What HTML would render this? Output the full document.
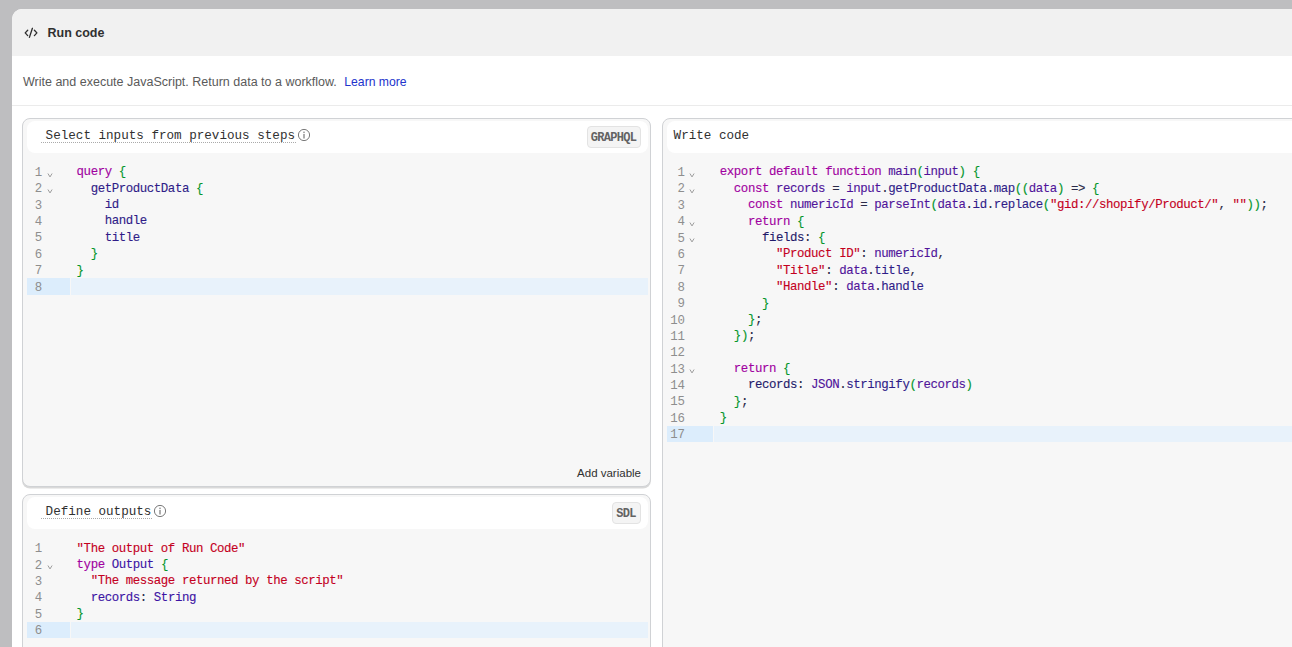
<!DOCTYPE html>
<html><head><meta charset="utf-8">
<style>
*{box-sizing:border-box;margin:0;padding:0}
html,body{width:1292px;height:647px;overflow:hidden;background:#bebec0;font-family:"Liberation Sans",sans-serif}
.modal{position:absolute;left:12px;top:9px;width:1400px;height:700px;background:#fff;border-radius:10px 10px 0 0;overflow:hidden}
.hdr{position:absolute;left:0;top:0;width:100%;height:47.2px;background:#f1f1f1}
.icon{position:absolute;left:12px;top:18px}
.title{position:absolute;left:35.5px;top:16px;font-size:12.5px;font-weight:bold;color:#303030;line-height:16px;white-space:nowrap}
.desc{position:absolute;left:11px;top:65px;font-size:12.5px;color:#5a5a5a;line-height:16px;white-space:nowrap}
.desc a{color:#2233cc;text-decoration:none;margin-left:4px;font-size:12.2px}
.sep{position:absolute;left:0;top:96px;width:100%;height:1px;background:#ebebeb}
.card{position:absolute;border:1px solid #d0d2d5;border-radius:8px;background:#f7f7f7}
.wh{position:absolute;left:3.6px;top:1.6px;right:1.8px;height:32.4px;background:#fff;border-radius:8px}
.ctitle{position:absolute;left:19px;top:7px;font-family:"Liberation Mono",monospace;font-size:12.6px;color:#303030;line-height:16px;white-space:nowrap}
.dots{position:absolute;height:1px;background:repeating-linear-gradient(to right,#aaaaaa 0 1px,transparent 1px 2px)}
.badge{position:absolute;border:1px solid #e3e3e3;background:#f4f4f4;border-radius:4px;font-family:"Liberation Mono",monospace;font-weight:bold;font-size:12px;letter-spacing:-0.7px;text-indent:-0.4px;color:#636363;text-align:center}
.ln{position:absolute;font-family:"Liberation Mono",monospace;font-size:12.4px;letter-spacing:-0.415px;line-height:16.38px;color:#8e8e8e;text-align:right;white-space:pre;margin-top:1.2px;margin-left:-0.6px}
.cl{position:absolute;font-family:"Liberation Mono",monospace;font-size:12.4px;letter-spacing:-0.415px;line-height:16.38px;color:#333;white-space:pre;-webkit-text-stroke:0.12px currentColor;margin-top:0.6px}
.info{position:absolute}
#root{position:relative;width:1292px;height:647px;overflow:hidden;background:#bebec0}
</style></head><body><div id="root">
<div class="modal">
  <div class="hdr">
    <svg class="icon" width="14" height="12" viewBox="0 0 14 12"><path d="M3.7 3.2L1.2 5.9L3.7 8.6M10.4 3.2L12.9 5.9L10.4 8.6M8.4 1.3L5.4 10.4" fill="none" stroke="#303030" stroke-width="1.35" stroke-linecap="round" stroke-linejoin="round"/></svg>
    <div class="title">Run code</div>
  </div>
  <div class="desc">Write and execute JavaScript. Return data to a workflow. <a>Learn more</a></div>
  <div class="sep"></div>
</div>

<!-- top-left card -->
<div class="card" style="left:22px;top:118px;width:629px;height:369px;box-shadow:0 1.5px 0 #d9d9d9">
  <div class="wh"><div class="ctitle"><span class="u">Select inputs from previous steps</span></div>
    <div class="badge" style="left:560px;top:5.4px;width:54px;height:22px;line-height:23px">GRAPHQL</div>
  </div>
  <div style="position:absolute;right:9px;top:348px;font-size:11.5px;color:#303030">Add variable</div>
</div>
<svg class="info" style="left:297px;top:128px" width="14" height="14" viewBox="0 0 14 14"><circle cx="7" cy="7" r="5.6" fill="none" stroke="#7a7a7a" stroke-width="1"/><rect x="6.2" y="3.6" width="1.6" height="1.4" fill="#9a9a9a"/><rect x="6.2" y="5.9" width="1.6" height="4.6" fill="#9a9a9a"/></svg>

<div class="dots" style="left:41px;top:142px;width:255px"></div>
<!-- bottom-left card -->
<div class="card" style="left:22px;top:494px;width:629px;height:300px">
  <div class="wh"><div class="ctitle"><span class="u">Define outputs</span></div>
    <div class="badge" style="left:585px;top:5.6px;width:29px;height:21.5px;line-height:22.5px">SDL</div>
  </div>
</div>
<svg class="info" style="left:153px;top:504px" width="14" height="14" viewBox="0 0 14 14"><circle cx="7" cy="7" r="5.6" fill="none" stroke="#7a7a7a" stroke-width="1"/><rect x="6.2" y="3.6" width="1.6" height="1.4" fill="#9a9a9a"/><rect x="6.2" y="5.9" width="1.6" height="4.6" fill="#9a9a9a"/></svg>

<div class="dots" style="left:41px;top:518px;width:111px"></div>
<!-- right card -->
<div class="card" style="left:662px;top:118px;width:700px;height:600px">
  <div class="wh"><div class="ctitle" style="left:7px">Write code</div></div>
</div>

<div style="position:absolute;left:27px;top:278.360px;width:42.80px;height:16.38px;background:#dcedfc"></div>
<div style="position:absolute;left:71px;top:278.360px;width:577px;height:16.38px;background:#e8f2fb"></div>
<div class="ln" style="left:2.299999999999997px;top:163.700px;width:40px">1</div>
<svg width="6" height="5" viewBox="0 0 6 5" style="position:absolute;left:46.50px;top:172.70px"><path d="M0.9 0.5L3 3.9L5.1 0.5" fill="none" stroke="#8c8c8c" stroke-width="0.85"/></svg>
<div class="cl" style="left:76.6px;top:163.700px"><span style="color:#a000a0">query</span> <span style="color:#05962c">{</span></div>
<div class="ln" style="left:2.299999999999997px;top:180.080px;width:40px">2</div>
<svg width="6" height="5" viewBox="0 0 6 5" style="position:absolute;left:46.50px;top:189.08px"><path d="M0.9 0.5L3 3.9L5.1 0.5" fill="none" stroke="#8c8c8c" stroke-width="0.85"/></svg>
<div class="cl" style="left:76.6px;top:180.080px">  <span style="color:#2f1c88">getProductData</span> <span style="color:#05962c">{</span></div>
<div class="ln" style="left:2.299999999999997px;top:196.460px;width:40px">3</div>
<div class="cl" style="left:76.6px;top:196.460px">    <span style="color:#2f1c88">id</span></div>
<div class="ln" style="left:2.299999999999997px;top:212.840px;width:40px">4</div>
<div class="cl" style="left:76.6px;top:212.840px">    <span style="color:#2f1c88">handle</span></div>
<div class="ln" style="left:2.299999999999997px;top:229.220px;width:40px">5</div>
<div class="cl" style="left:76.6px;top:229.220px">    <span style="color:#2f1c88">title</span></div>
<div class="ln" style="left:2.299999999999997px;top:245.600px;width:40px">6</div>
<div class="cl" style="left:76.6px;top:245.600px">  <span style="color:#05962c">}</span></div>
<div class="ln" style="left:2.299999999999997px;top:261.980px;width:40px">7</div>
<div class="cl" style="left:76.6px;top:261.980px"><span style="color:#05962c">}</span></div>
<div class="ln" style="left:2.299999999999997px;top:278.360px;width:40px">8</div>
<div style="position:absolute;left:667px;top:425.980px;width:45.80px;height:16.38px;background:#dcedfc"></div>
<div style="position:absolute;left:714px;top:425.980px;width:686px;height:16.38px;background:#e8f2fb"></div>
<div class="ln" style="left:645px;top:163.900px;width:40px">1</div>
<svg width="6" height="5" viewBox="0 0 6 5" style="position:absolute;left:689.20px;top:172.90px"><path d="M0.9 0.5L3 3.9L5.1 0.5" fill="none" stroke="#8c8c8c" stroke-width="0.85"/></svg>
<div class="cl" style="left:719.8px;top:163.900px"><span style="color:#a000a0">export</span> <span style="color:#a000a0">default</span> <span style="color:#a000a0">function</span> <span style="color:#50149a">main</span><span style="color:#05962c">(</span><span style="color:#50149a">input</span><span style="color:#05962c">)</span> <span style="color:#05962c">{</span></div>
<div class="ln" style="left:645px;top:180.280px;width:40px">2</div>
<svg width="6" height="5" viewBox="0 0 6 5" style="position:absolute;left:689.20px;top:189.28px"><path d="M0.9 0.5L3 3.9L5.1 0.5" fill="none" stroke="#8c8c8c" stroke-width="0.85"/></svg>
<div class="cl" style="left:719.8px;top:180.280px">  <span style="color:#a000a0">const</span> <span style="color:#50149a">records</span><span style="color:#2a2a48"> = </span><span style="color:#50149a">input</span><span style="color:#2a2a48">.</span><span style="color:#2f1c88">getProductData</span><span style="color:#2a2a48">.</span><span style="color:#2f1c88">map</span><span style="color:#05962c">((</span><span style="color:#50149a">data</span><span style="color:#05962c">)</span><span style="color:#2a2a48"> =&gt; </span><span style="color:#05962c">{</span></div>
<div class="ln" style="left:645px;top:196.660px;width:40px">3</div>
<div class="cl" style="left:719.8px;top:196.660px">    <span style="color:#a000a0">const</span> <span style="color:#50149a">numericId</span><span style="color:#2a2a48"> = </span><span style="color:#50149a">parseInt</span><span style="color:#05962c">(</span><span style="color:#50149a">data</span><span style="color:#2a2a48">.</span><span style="color:#2f1c88">id</span><span style="color:#2a2a48">.</span><span style="color:#2f1c88">replace</span><span style="color:#05962c">(</span><span style="color:#c4001e">&quot;gid://shopify/Product/&quot;</span><span style="color:#2a2a48">, </span><span style="color:#c4001e">&quot;&quot;</span><span style="color:#05962c">))</span><span style="color:#2a2a48">;</span></div>
<div class="ln" style="left:645px;top:213.040px;width:40px">4</div>
<svg width="6" height="5" viewBox="0 0 6 5" style="position:absolute;left:689.20px;top:222.04px"><path d="M0.9 0.5L3 3.9L5.1 0.5" fill="none" stroke="#8c8c8c" stroke-width="0.85"/></svg>
<div class="cl" style="left:719.8px;top:213.040px">    <span style="color:#a000a0">return</span> <span style="color:#05962c">{</span></div>
<div class="ln" style="left:645px;top:229.420px;width:40px">5</div>
<svg width="6" height="5" viewBox="0 0 6 5" style="position:absolute;left:689.20px;top:238.42px"><path d="M0.9 0.5L3 3.9L5.1 0.5" fill="none" stroke="#8c8c8c" stroke-width="0.85"/></svg>
<div class="cl" style="left:719.8px;top:229.420px">      <span style="color:#1f1a6a">fields</span><span style="color:#2a2a48">: </span><span style="color:#05962c">{</span></div>
<div class="ln" style="left:645px;top:245.800px;width:40px">6</div>
<div class="cl" style="left:719.8px;top:245.800px">        <span style="color:#c4001e">&quot;Product ID&quot;</span><span style="color:#2a2a48">: </span><span style="color:#50149a">numericId</span><span style="color:#2a2a48">,</span></div>
<div class="ln" style="left:645px;top:262.180px;width:40px">7</div>
<div class="cl" style="left:719.8px;top:262.180px">        <span style="color:#c4001e">&quot;Title&quot;</span><span style="color:#2a2a48">: </span><span style="color:#50149a">data</span><span style="color:#2a2a48">.</span><span style="color:#2f1c88">title</span><span style="color:#2a2a48">,</span></div>
<div class="ln" style="left:645px;top:278.560px;width:40px">8</div>
<div class="cl" style="left:719.8px;top:278.560px">        <span style="color:#c4001e">&quot;Handle&quot;</span><span style="color:#2a2a48">: </span><span style="color:#50149a">data</span><span style="color:#2a2a48">.</span><span style="color:#2f1c88">handle</span></div>
<div class="ln" style="left:645px;top:294.940px;width:40px">9</div>
<div class="cl" style="left:719.8px;top:294.940px">      <span style="color:#05962c">}</span></div>
<div class="ln" style="left:645px;top:311.320px;width:40px">10</div>
<div class="cl" style="left:719.8px;top:311.320px">    <span style="color:#05962c">}</span><span style="color:#2a2a48">;</span></div>
<div class="ln" style="left:645px;top:327.700px;width:40px">11</div>
<div class="cl" style="left:719.8px;top:327.700px">  <span style="color:#05962c">}</span><span style="color:#05962c">)</span><span style="color:#2a2a48">;</span></div>
<div class="ln" style="left:645px;top:344.080px;width:40px">12</div>
<div class="ln" style="left:645px;top:360.460px;width:40px">13</div>
<svg width="6" height="5" viewBox="0 0 6 5" style="position:absolute;left:689.20px;top:369.46px"><path d="M0.9 0.5L3 3.9L5.1 0.5" fill="none" stroke="#8c8c8c" stroke-width="0.85"/></svg>
<div class="cl" style="left:719.8px;top:360.460px">  <span style="color:#a000a0">return</span> <span style="color:#05962c">{</span></div>
<div class="ln" style="left:645px;top:376.840px;width:40px">14</div>
<div class="cl" style="left:719.8px;top:376.840px">    <span style="color:#1f1a6a">records</span><span style="color:#2a2a48">: </span><span style="color:#50149a">JSON</span><span style="color:#2a2a48">.</span><span style="color:#2f1c88">stringify</span><span style="color:#05962c">(</span><span style="color:#50149a">records</span><span style="color:#05962c">)</span></div>
<div class="ln" style="left:645px;top:393.220px;width:40px">15</div>
<div class="cl" style="left:719.8px;top:393.220px">  <span style="color:#05962c">}</span><span style="color:#2a2a48">;</span></div>
<div class="ln" style="left:645px;top:409.600px;width:40px">16</div>
<div class="cl" style="left:719.8px;top:409.600px"><span style="color:#05962c">}</span></div>
<div class="ln" style="left:645px;top:425.980px;width:40px">17</div>
<div style="position:absolute;left:27px;top:621.900px;width:43.00px;height:16.38px;background:#dcedfc"></div>
<div style="position:absolute;left:71.2px;top:621.900px;width:576.8px;height:16.38px;background:#e8f2fb"></div>
<div class="ln" style="left:2.299999999999997px;top:540.000px;width:40px">1</div>
<div class="cl" style="left:76.6px;top:540.000px"><span style="color:#c4001e">&quot;The output of Run Code&quot;</span></div>
<div class="ln" style="left:2.299999999999997px;top:556.380px;width:40px">2</div>
<svg width="6" height="5" viewBox="0 0 6 5" style="position:absolute;left:46.50px;top:565.38px"><path d="M0.9 0.5L3 3.9L5.1 0.5" fill="none" stroke="#8c8c8c" stroke-width="0.85"/></svg>
<div class="cl" style="left:76.6px;top:556.380px"><span style="color:#a000a0">type</span> <span style="color:#3c14a4">Output</span> <span style="color:#05962c">{</span></div>
<div class="ln" style="left:2.299999999999997px;top:572.760px;width:40px">3</div>
<div class="cl" style="left:76.6px;top:572.760px">  <span style="color:#c4001e">&quot;The message returned by the script&quot;</span></div>
<div class="ln" style="left:2.299999999999997px;top:589.140px;width:40px">4</div>
<div class="cl" style="left:76.6px;top:589.140px">  <span style="color:#3c14a4">records</span><span style="color:#2a2a48">: </span><span style="color:#3c14a4">String</span></div>
<div class="ln" style="left:2.299999999999997px;top:605.520px;width:40px">5</div>
<div class="cl" style="left:76.6px;top:605.520px"><span style="color:#05962c">}</span></div>
<div class="ln" style="left:2.299999999999997px;top:621.900px;width:40px">6</div>
</div></body></html>
